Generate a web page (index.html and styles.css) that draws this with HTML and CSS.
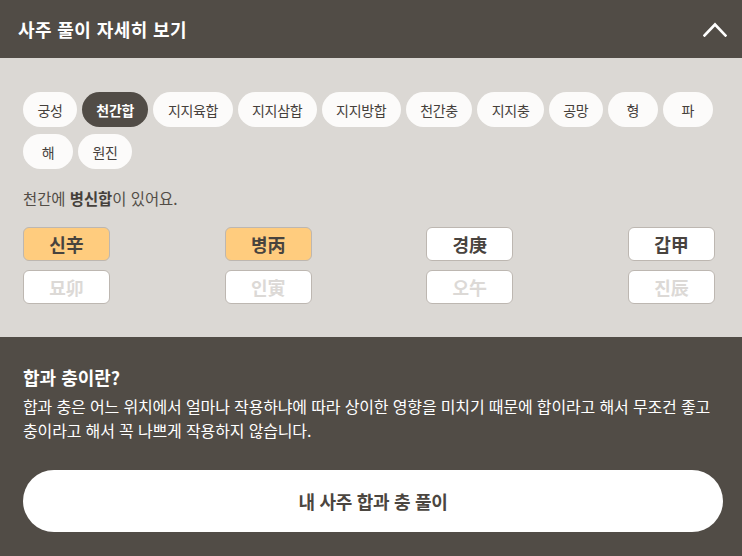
FILE: index.html
```html
<!DOCTYPE html>
<html lang="ko">
<head>
<meta charset="utf-8">
<link rel="stylesheet" href="styles.css">
</head>
<body>
<div class="page">
  <header class="head">
    <h1 class="head-title">사주 풀이 자세히 보기</h1>
    <svg class="chev" width="24" height="15" viewBox="0 0 24 15"><polyline points="1.5,13.5 12,2.5 22.5,13.5" fill="none" stroke="#fff" stroke-width="2.6" stroke-linecap="square"/></svg>
  </header>
  <section class="panel">
    <div class="chips">
      <span class="chip">궁성</span>
      <span class="chip active">천간합</span>
      <span class="chip">지지육합</span>
      <span class="chip">지지삼합</span>
      <span class="chip">지지방합</span>
      <span class="chip">천간충</span>
      <span class="chip">지지충</span>
      <span class="chip">공망</span>
      <span class="chip">형</span>
      <span class="chip">파</span>
      <span class="chip">해</span>
      <span class="chip">원진</span>
    </div>
    <p class="desc">천간에 <b>병신합</b>이 있어요.</p>
    <div class="grid">
      <div class="box hl">신辛</div>
      <div class="box hl">병丙</div>
      <div class="box">경庚</div>
      <div class="box">갑甲</div>
      <div class="box dim">묘卯</div>
      <div class="box dim">인寅</div>
      <div class="box dim">오午</div>
      <div class="box dim">진辰</div>
    </div>
  </section>
  <section class="info">
    <h2 class="info-title">합과 충이란?</h2>
    <p class="info-text">합과 충은 어느 위치에서 얼마나 작용하냐에 따라 상이한 영향을 미치기 때문에 합이라고 해서 무조건 좋고 충이라고 해서 꼭 나쁘게 작용하지 않습니다.</p>
    <button class="cta">내 사주 합과 충 풀이</button>
  </section>
</div>
</body>
</html>
```

FILE: styles.css
```css
* { box-sizing: border-box; }
html, body { margin: 0; padding: 0; }
body {
  font-family: "Noto Sans CJK KR", "Noto Sans", sans-serif;
  background: #514c46;
  width: 742px;
  height: 556px;
  overflow: hidden;
}
.page { width: 742px; }
.head {
  height: 58px;
  background: #514c46;
  display: flex;
  align-items: center;
  justify-content: space-between;
  padding: 0 15px 0 18px;
}
.head-title {
  margin: 0;
  color: #fff;
  font-size: 18px;
  font-weight: 700;
  letter-spacing: 0.4px;
  line-height: 1;
}
.chev { display: block; margin-top: 1px; }
.panel {
  background: #dbd8d4;
  padding: 34px 23px 33px 23px;
}
.chips {
  display: flex;
  flex-wrap: wrap;
  gap: 7px 5px;
}
.chip {
  height: 35px;
  min-width: 50px;
  padding: 0 14.4px;
  border-radius: 18px;
  background: #fcfbfa;
  color: #45403b;
  font-size: 14px;
  letter-spacing: -0.3px;
  display: flex;
  align-items: center;
  justify-content: center;
}
.chip.active {
  background: #514c46;
  color: #fff;
  font-weight: 700;
}
.desc {
  margin: 16px 0 0 0;
  font-size: 15.4px;
  color: #524d47;
  line-height: 26px;
}
.desc b { font-weight: 700; color: #45403b; }
.grid {
  margin: 16px 4px 0 0;
  display: grid;
  grid-template-columns: repeat(4, 87px);
  justify-content: space-between;
  row-gap: 9px;
}
.box {
  height: 34px;
  border: 1px solid #bdb7b1;
  border-radius: 6px;
  background: #fff;
  display: flex;
  align-items: center;
  justify-content: center;
  font-size: 18px;
  font-weight: 700;
  color: #48433e;
}
.box.hl { background: #ffcc7e; }
.box.dim { color: #dcd9d6; }
.info {
  padding: 27px 23px 24px 23px;
  color: #fff;
}
.info-title {
  margin: 0;
  font-size: 18px;
  font-weight: 700;
  line-height: 26px;
}
.info-text {
  margin: 4px 0 0 0;
  font-size: 16px;
  letter-spacing: -0.15px;
  line-height: 24px;
}
.cta {
  display: flex;
  align-items: center;
  justify-content: center;
  width: 700px;
  height: 62px;
  margin-top: 28px;
  border: none;
  border-radius: 31px;
  background: #fff;
  color: #4b4640;
  font-family: inherit;
  font-size: 18px;
  letter-spacing: -0.3px;
  font-weight: 700;
}
```
